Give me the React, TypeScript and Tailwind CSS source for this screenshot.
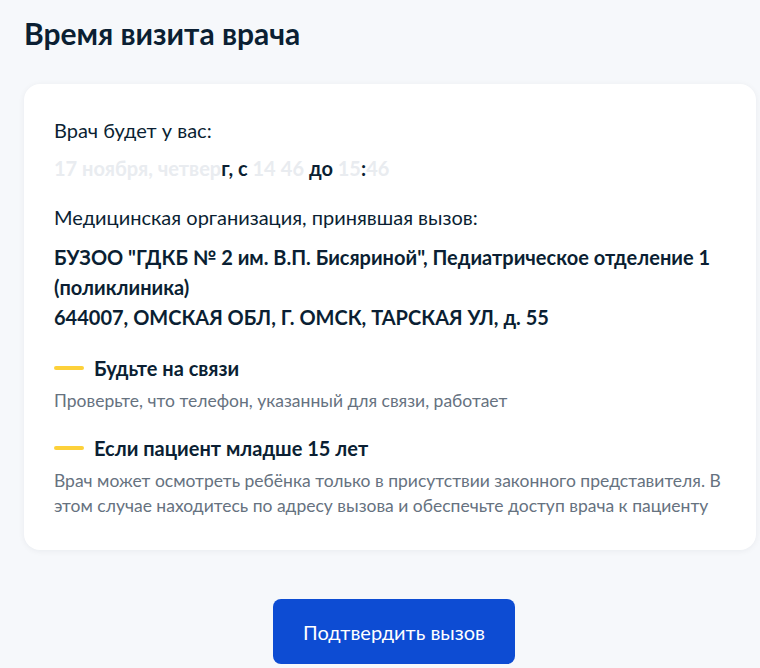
export default function App() {
  const faint = 'text-[#e9ecf0]';
  const dark = 'text-[#0b1f33]';
  return (
    <div className="min-h-[668px] w-[760px] overflow-hidden bg-[#f6f8fb] font-['Lato','Noto_Sans',sans-serif] text-[#0b1f33]">
      <h1 className="px-6 pt-[14px] text-[30px] font-bold leading-[38px]">Время визита врача</h1>

      <div className="ml-6 mr-1 mt-[32px] rounded-2xl bg-white px-[30px] pb-[32px] pt-[30px] shadow-[0_1px_6px_rgba(11,31,51,0.06)]">
        <p className="text-[20px] leading-[32px]">Врач будет у вас:</p>
        <p className="mt-[6px] text-[20px] font-bold leading-[32px]">
          <span className={faint}>17 ноября, четвер</span>
          <span className={dark}>г, с</span>
          <span className={faint}> 14</span>
          <span className="text-white">:</span>
          <span className={faint}>46 </span>
          <span className={dark}>до</span>
          <span className={faint}> 15</span>
          <span className={dark}>:</span>
          <span className={faint}>46</span>
        </p>

        <p className="mt-[17px] text-[20px] leading-[32px]">Медицинская организация, принявшая вызов:</p>
        <p className="mt-[9px] text-[20px] font-bold leading-[30px]">
          БУЗОО "ГДКБ № 2 им. В.П. Бисяриной", Педиатрическое отделение 1 (поликлиника)
          <br />
          644007, ОМСКАЯ ОБЛ, Г. ОМСК, ТАРСКАЯ УЛ, д. 55
        </p>

        <div className="mt-[23px]">
          <div className="flex items-center gap-[10px]">
            <span className="h-[4px] w-[30px] rounded-full bg-[#fdd13a]" />
            <span className="text-[20px] font-bold leading-[26px]">Будьте на связи</span>
          </div>
          <p className="mt-[8px] text-[17.5px] leading-[24px] text-[#66727f]">
            Проверьте, что телефон, указанный для связи, работает
          </p>
        </div>

        <div className="mt-[22px]">
          <div className="flex items-center gap-[10px]">
            <span className="h-[4px] w-[30px] rounded-full bg-[#fdd13a]" />
            <span className="text-[20px] font-bold leading-[26px]">Если пациент младше 15 лет</span>
          </div>
          <p className="mt-[7px] text-[17.5px] leading-[25px] text-[#66727f]">
            Врач может осмотреть ребёнка только в присутствии законного представителя. В этом случае находитесь по адресу вызова и обеспечьте доступ врача к пациенту
          </p>
        </div>
      </div>

      <div className="mt-[49px] flex justify-center pl-[28px]">
        <button className="h-[65px] w-[242px] rounded-lg bg-[#0d4cd3] text-[20px] text-white">
          Подтвердить вызов
        </button>
      </div>
    </div>
  );
}
